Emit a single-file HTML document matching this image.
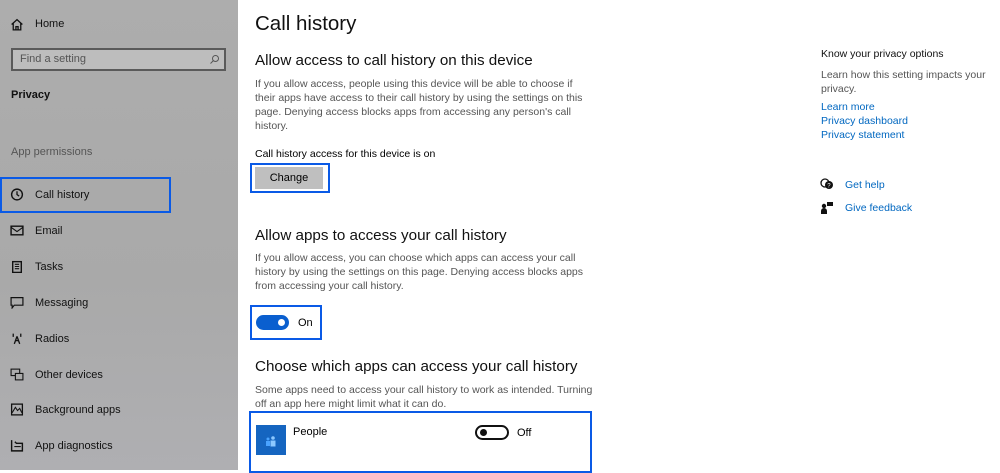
<!DOCTYPE html><html><head><style>
*{margin:0;padding:0;box-sizing:border-box}
body{width:1000px;height:470px;overflow:hidden;position:relative;background:#fff;font-family:"Liberation Sans",sans-serif;color:#000}
.a{position:absolute;white-space:nowrap}
#side{position:absolute;left:0;top:0;width:238px;height:470px;background:linear-gradient(180deg,#adadad,#a9a9a9 60%,#afafb2)}
.si{font-size:11px;color:#111}
.ic{position:absolute;left:10px;width:14px;height:13px}
.p{font-size:10.5px;line-height:14px;color:#555;white-space:normal;width:340px}
.h{font-size:15.2px;color:#111}
.lk{font-size:10.5px;color:#0067c0}
.box{position:absolute;border:2px solid #0a5ae6}
</style></head><body>
<div id="side">
<svg class="ic" style="top:18px" viewBox="0 0 13 12"><path d="M1.5 6L6.5 1.5 11.5 6M3 5v6h7V5M5.5 11V8h2v3" fill="none" stroke="#111" stroke-width="1.2"/></svg>
<div class="a si" style="left:35px;top:18px">Home</div>
<div class="a" style="left:11px;top:48px;width:215px;height:23px;border:2px solid #5a5a5a;background:#bdbdbd"></div>
<div class="a" style="left:20px;top:53px;font-size:11px;color:#555">Find a setting</div>
<svg class="a" style="left:209px;top:54px" width="11" height="11" viewBox="0 0 11 11"><circle cx="6.5" cy="4.5" r="3" fill="none" stroke="#555"/><path d="M4.5 6.5L1.5 9.5" stroke="#555"/></svg>
<div class="a si" style="left:11px;top:89px;font-weight:bold">Privacy</div>
<div class="a si" style="left:11px;top:146px;color:#555">App permissions</div>
<div class="box" style="left:0;top:177px;width:171px;height:36px"></div>
<svg class="ic" style="top:188px" viewBox="0 0 13 12"><circle cx="6.5" cy="6" r="5" fill="none" stroke="#111" stroke-width="1.3"/><path d="M6.5 3v3l2 1.5" fill="none" stroke="#111" stroke-width="1.2"/></svg>
<div class="a si" style="left:35px;top:189px">Call history</div>
<svg class="ic" style="top:224px" viewBox="0 0 13 12"><rect x="1" y="2" width="11" height="8" fill="none" stroke="#111" stroke-width="1.3"/><path d="M1 3l5.5 4 5.5-4" fill="none" stroke="#111"/></svg>
<div class="a si" style="left:35px;top:225px">Email</div>
<svg class="ic" style="top:260px" viewBox="0 0 13 12"><rect x="2.5" y="1.5" width="8" height="10" fill="none" stroke="#111" stroke-width="1.3"/><path d="M4.5 4h4M4.5 6h4M4.5 8h4" stroke="#111"/></svg>
<div class="a si" style="left:35px;top:261px">Tasks</div>
<svg class="ic" style="top:296px" viewBox="0 0 13 12"><path d="M1 1.5h11v7H4L2 11V8.5H1z" fill="none" stroke="#111" stroke-width="1.1"/></svg>
<div class="a si" style="left:35px;top:297px">Messaging</div>
<svg class="ic" style="top:332px" viewBox="0 0 13 12"><path d="M6.5 4L4 11M6.5 4L9 11M5 8h3M3 1.5v3M10 1.5v3" fill="none" stroke="#111" stroke-width="1.2"/></svg>
<div class="a si" style="left:35px;top:333px">Radios</div>
<svg class="ic" style="top:368px" viewBox="0 0 13 12"><rect x="1" y="1" width="8" height="6" fill="none" stroke="#111"/><rect x="5" y="5" width="7" height="6" fill="#aaa" stroke="#111"/></svg>
<div class="a si" style="left:35px;top:369px">Other devices</div>
<svg class="ic" style="top:403px" viewBox="0 0 13 12"><rect x="1.5" y="1" width="10" height="10" fill="none" stroke="#111" stroke-width="1.2"/><path d="M2 9l3-5 2 3 2-2 2 4" fill="none" stroke="#111"/></svg>
<div class="a si" style="left:35px;top:404px">Background apps</div>
<svg class="ic" style="top:439px" viewBox="0 0 13 12"><path d="M1.5 1v10h10V4H6L4.5 2.5" fill="none" stroke="#111" stroke-width="1.3"/><path d="M4 7h6" stroke="#111"/></svg>
<div class="a si" style="left:35px;top:440px">App diagnostics</div>
</div>

<div class="a" style="left:255px;top:12px;font-size:20.5px;color:#111">Call history</div>
<div class="a h" style="left:255px;top:52px">Allow access to call history on this device</div>
<div class="a p" style="left:255px;top:77px;width:336px">If you allow access, people using this device will be able to choose if their apps have access to their call history by using the settings on this page. Denying access blocks apps from accessing any person's call history.</div>
<div class="a" style="left:255px;top:148px;font-size:10.5px">Call history access for this device is on</div>
<div class="box" style="left:250px;top:163px;width:80px;height:30px"></div>
<div class="a" style="left:255px;top:167px;width:68px;height:22px;background:#bfbfbf;font-size:11px;text-align:center;line-height:22px">Change</div>
<div class="a h" style="left:255px;top:227px">Allow apps to access your call history</div>
<div class="a p" style="left:255px;top:251px">If you allow access, you can choose which apps can access your call history by using the settings on this page. Denying access blocks apps from accessing your call history.</div>
<div class="box" style="left:250px;top:305px;width:72px;height:35px"></div>
<div class="a" style="left:256px;top:315px;width:33px;height:15px;border-radius:8px;background:#0a5fcf"></div>
<div class="a" style="left:278px;top:319px;width:7px;height:7px;border-radius:50%;background:#fff"></div>
<div class="a" style="left:298px;top:317px;font-size:11px">On</div>
<div class="a h" style="left:255px;top:358px">Choose which apps can access your call history</div>
<div class="a p" style="left:255px;top:383px">Some apps need to access your call history to work as intended. Turning off an app here might limit what it can do.</div>
<div class="box" style="left:249px;top:411px;width:343px;height:62px"></div>
<div class="a" style="left:256px;top:425px;width:30px;height:30px;background:#1565c0"></div>
<svg class="a" style="left:264px;top:433px" width="14" height="14" viewBox="0 0 14 14"><circle cx="4" cy="6" r="1.5" fill="#4aa3ff"/><circle cx="9" cy="5" r="1.8" fill="#8cc8ff"/><rect x="2" y="8" width="4" height="5" fill="#4aa3ff"/><rect x="6.5" y="7.5" width="5" height="6" fill="#8cc8ff"/></svg>
<div class="a" style="left:293px;top:426px;font-size:11px">People</div>
<div class="a" style="left:475px;top:425px;width:34px;height:15px;border-radius:8px;border:2px solid #111"></div>
<div class="a" style="left:480px;top:429px;width:7px;height:7px;border-radius:50%;background:#111"></div>
<div class="a" style="left:517px;top:427px;font-size:11px">Off</div>

<div class="a" style="left:821px;top:48px;font-size:10.5px;color:#111">Know your privacy options</div>
<div class="a p" style="left:821px;top:68px;width:175px">Learn how this setting impacts your privacy.</div>
<div class="a lk" style="left:821px;top:101px">Learn more</div>
<div class="a lk" style="left:821px;top:115px">Privacy dashboard</div>
<div class="a lk" style="left:821px;top:129px">Privacy statement</div>
<svg class="a" style="left:820px;top:178px" width="14" height="13" viewBox="0 0 14 13"><circle cx="5" cy="5" r="4" fill="none" stroke="#111" stroke-width="1.3"/><circle cx="9" cy="7" r="4" fill="#111"/><text x="7.3" y="9.5" font-size="6" fill="#fff" font-family="Liberation Sans">?</text></svg>
<div class="a lk" style="left:845px;top:179px">Get help</div>
<svg class="a" style="left:820px;top:201px" width="14" height="13" viewBox="0 0 14 13"><circle cx="4" cy="5" r="2.2" fill="#111"/><path d="M1 13v-3a3 3 0 0 1 6 0v3z" fill="#111"/><rect x="7" y="1" width="6" height="4" fill="#111"/></svg>
<div class="a lk" style="left:845px;top:202px">Give feedback</div>
</body></html>
